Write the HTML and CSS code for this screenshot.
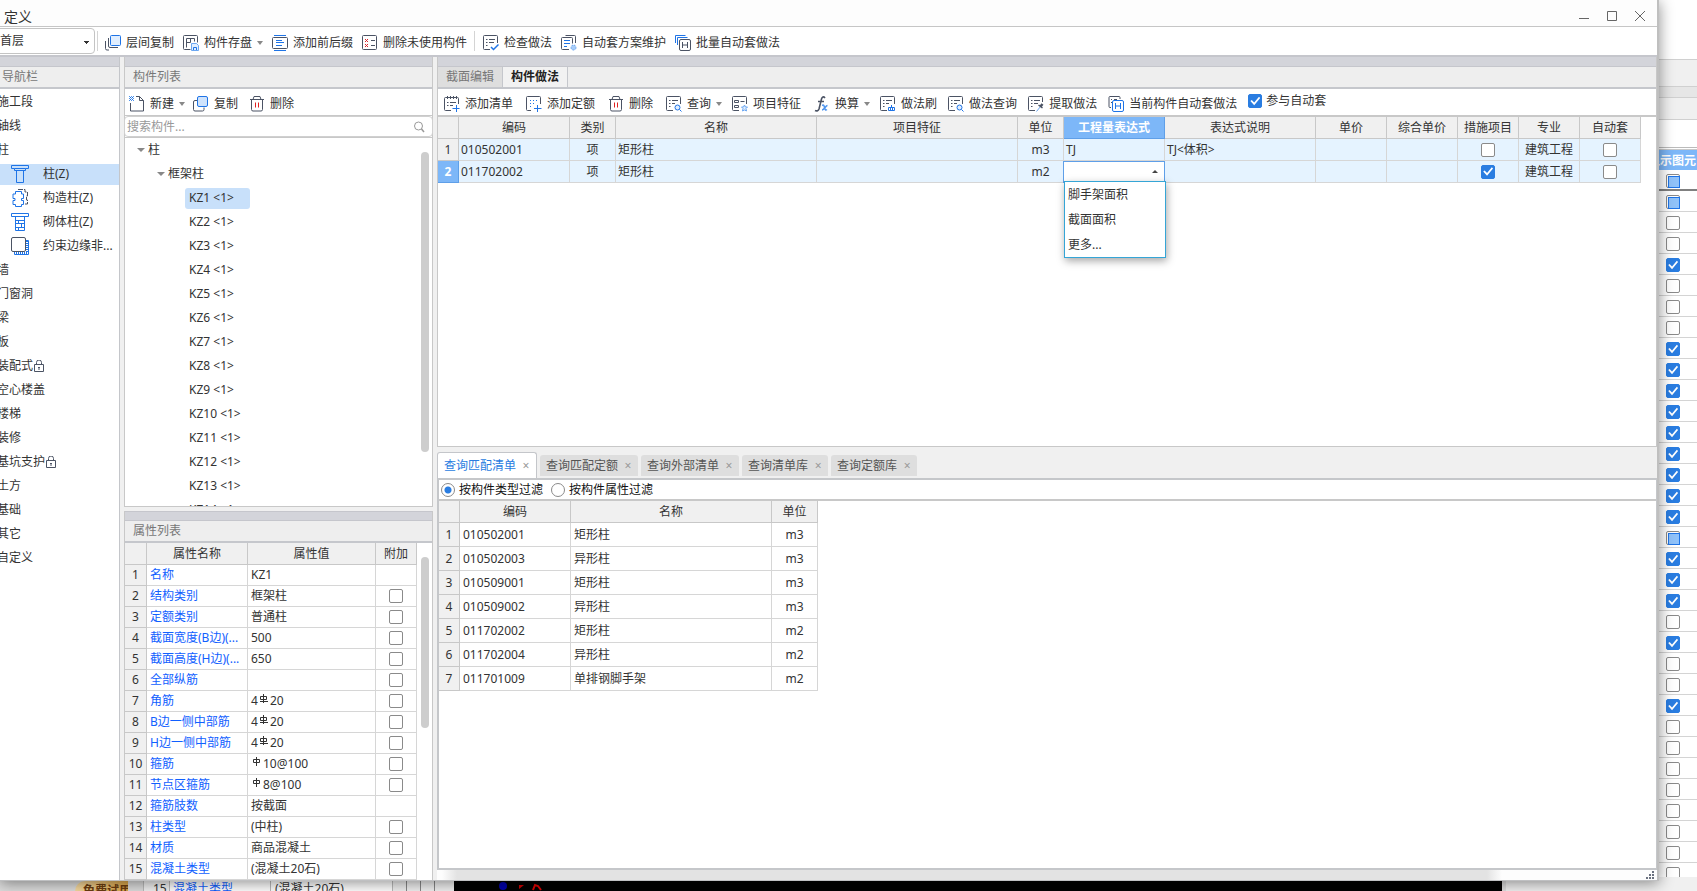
FILE: index.html
```html
<!DOCTYPE html>
<html lang="zh-CN">
<head>
<meta charset="utf-8">
<title>定义</title>
<link rel="stylesheet" href="styles.css">
</head>
<body>
<svg class="sprite" aria-hidden="true">
  <symbol id="i-floors" viewBox="0 0 16 16"><rect x="5.5" y=".5" width="10" height="10" rx="1" fill="#e0eeff" stroke="#1f74e6"/><path d="M3.500 3v8a1.500 1.500 0 0 0 1.500 1.500h8M.5 6v7.500a1.500 1.500 0 0 0 1.500 1.500h2"/></symbol>
  <symbol id="i-save" viewBox="0 0 16 16"><path d="M7.500 14.500h-6a1 1 0 0 1-1-1v-12a1 1 0 0 1 1-1h12a1 1 0 0 1 1 1v6M3.500 12.500v-9h8v3M3.500 7.500h4v-4"/><path d="M8.500 8.500h5l2 2v5h-7z" fill="#e0eeff" stroke="#6ba7f2"/><path d="M10.500 15v-2.500h3V15" stroke="#1f74e6"/></symbol>
  <symbol id="i-affix" viewBox="0 0 16 16"><path d="M2 .5h12M2 15.500h12M4 5.500h6M4 7.500h8M4 10.500h6" stroke="#1f74e6"/><rect x=".5" y="2.500" width="15" height="11" rx="1"/></symbol>
  <symbol id="i-unused" viewBox="0 0 16 16"><rect x=".5" y=".5" width="14" height="14" rx="1"/><path d="M3 4l3 3M6 4l-3 3M3 9l3 3M6 9l-3 3" stroke="#d9252b"/><path d="M9 5.500h4M9 10.500h4"/></symbol>
  <symbol id="i-check" viewBox="0 0 16 16"><path d="M7 14.500H1.500a1 1 0 0 1-1-1v-12a1 1 0 0 1 1-1h12a1 1 0 0 1 1 1V8M3 4.500h1.500M6 4.500h6M3 7.500h1.500M6 7.500h5M3 10.500h1.500"/><path d="M8 12l2.500 2.500L15.500 9.500" stroke="#1f74e6" stroke-width="1.500"/></symbol>
  <symbol id="i-plan" viewBox="0 0 16 16"><path d="M8 14.500H1.500a1 1 0 0 1-1-1v-10a1 1 0 0 1 1-1h9a1 1 0 0 1 1 1v5M4.500.5h9a1 1 0 0 1 1 1V8"/><path d="M3 5.500h6M3 8.500h6M3 11.500h3" stroke="#1f74e6"/><circle cx="12.500" cy="12.500" r="2.500" fill="#a9cdf8" stroke="#6ba7f2" stroke-dasharray="2 1"/></symbol>
  <symbol id="i-batch" viewBox="0 0 16 16"><path d="M.5 8V.5h10M2.500 10V2.500h10" stroke="#1f74e6"/><rect x="4.500" y="4.500" width="11" height="11" rx="1.500"/><path d="M7.500 7v6M12.500 7v6M7.500 10h5"/></symbol>
  <symbol id="i-new" viewBox="0 0 16 16"><path d="M1.500 7v8h13V4.500l-4-4H7M10.500.5v4h4"/><path d="M0 .5h5M0 2.500h5M0 4.500h5" stroke="#4d94ee" stroke-dasharray="1 1"/><path d="M0 1.500h5M0 3.500h5" stroke="#1f74e6" stroke-dasharray="1 1" stroke-dashoffset="1"/></symbol>
  <symbol id="i-copy" viewBox="0 0 16 16"><path d="M4 4.500H2a1.500 1.500 0 0 0-1.500 1.500v7.500a1.500 1.500 0 0 0 1.500 1.500h7.500a1.500 1.500 0 0 0 1.500-1.500v-2"/><rect x="4.500" y=".5" width="10" height="10" rx="1.500" fill="#cfe3fc" stroke="#1f74e6"/></symbol>
  <symbol id="i-trash" viewBox="0 0 16 16"><path d="M1 3.500h14M4 3.500l1-3h6l1 3M2.500 3.500v10a1.500 1.500 0 0 0 1.500 1.500h8a1.500 1.500 0 0 0 1.500-1.500v-10"/><path d="M6.500 6.500v5M9.500 6.500v5" stroke="#e02020"/></symbol>
  <symbol id="i-addlist" viewBox="0 0 16 16"><path d="M7 14.500H1.500a1 1 0 0 1-1-1v-11a1 1 0 0 1 1-1h12a1 1 0 0 1 1 1V8M3.500 0v3M6.500 0v3M9.500 0v3M12.500 0v3M3 6.500h1.500M6 6.500h6M3 9.500h1.500M6 9.500h3"/><path d="M8.500 12.500h7M12.500 9v7" stroke="#1f74e6"/></symbol>
  <symbol id="i-addquota" viewBox="0 0 16 16"><path d="M5 14.500H1.500a1 1 0 0 1-1-1v-12a1 1 0 0 1 1-1h12a1 1 0 0 1 1 1V8"/><path d="M4 4.500h9M4 7.500h6M4 10.500h3" stroke="#1f74e6" stroke-dasharray="1 2"/><path d="M8 12.500h7.500M11.500 9v7" stroke="#1f74e6"/></symbol>
  <symbol id="i-query" viewBox="0 0 16 16"><path d="M7 14.500H1.500a1 1 0 0 1-1-1v-12a1 1 0 0 1 1-1h12a1 1 0 0 1 1 1V8M3 4.500h1.500M6 4.500h6M3 7.500h1.500M6 7.500h3M3 10.500h1.500"/><circle cx="11.500" cy="11.500" r="2.500" fill="#e0eeff" stroke="#1f74e6"/><path d="M13.500 13.500l2 2" stroke="#1f74e6"/></symbol>
  <symbol id="i-feature" viewBox="0 0 16 16"><path d="M7 14.500H1.500a1 1 0 0 1-1-1v-12a1 1 0 0 1 1-1h12a1 1 0 0 1 1 1V8M2.500 4.500h4v2h-4zM2.500 9.500h4v2h-4zM8.500 5.500h4"/><path d="M12.500 9l1 2h2l-1.500 1.500.5 2.500-2-1-2 1 .5-2.500L9.500 11h2z" fill="#e0eeff" stroke="#6ba7f2"/></symbol>
  <symbol id="i-fx" viewBox="0 0 16 16"><path d="M11 2C9.500 0 8 1 7.500 3L5 13c-.5 1.500-2 2.500-4 1.500M4 5.500h6" stroke-width="1.600"/><path d="M8 9.500c2-1 2 0 2.500 2s1 3 2.500 2M13.500 9.500c-2 0-3 4.500-5.500 4.500" stroke="#4d94ee" stroke-width="1.500"/></symbol>
  <symbol id="i-brush" viewBox="0 0 16 16"><path d="M7 14.500H1.500a1 1 0 0 1-1-1v-12a1 1 0 0 1 1-1h12a1 1 0 0 1 1 1V8M3 4.500h1.500M6 4.500h6M3 7.500h1.500M6 7.500h3M3 10.500h1.500"/><path d="M11.500 9v2.500M8.500 14.500v-3h6v3zM10.500 12v2.500M12.500 12v2.500" stroke="#1f74e6"/></symbol>
  <symbol id="i-extract" viewBox="0 0 16 16"><path d="M7 14.500H1.500a1 1 0 0 1-1-1v-12a1 1 0 0 1 1-1h12a1 1 0 0 1 1 1V6M3 4.500h1.500M6 4.500h6M3 7.500h1.500M6 7.500h4M3 10.500h1.500"/><path d="M8.500 15.500l4-5" stroke="#6ba7f2"/><path d="M10.500 9l4 3" stroke-width="1.500"/><path d="M12.500 10.500l2-2.500" stroke-width="2.500"/></symbol>
  <symbol id="i-current" viewBox="0 0 16 16"><path d="M3 11.500H2a1 1 0 0 1-1-1v-9a1 1 0 0 1 1-1h9a1 1 0 0 1 1 1V3M3 3.500h1M6 3.500h3M3 6.500h1"/><rect x="4.500" y="4.500" width="11" height="11" rx="1.500" stroke="#1f74e6" fill="#fff"/><path d="M7.500 7v6M12.500 7v6M7.500 10h5" stroke="#1f74e6"/></symbol>
  <symbol id="i-lock" viewBox="0 0 10 12"><path d="M2.500 4V2.500a2 2 0 0 1 5 0V4M.5 4.500h9v7h-9zM5 7v3M4 7.500h2"/></symbol>
  <symbol id="i-search" viewBox="0 0 12 12"><circle cx="5.500" cy="5" r="4" stroke="#999"/><path d="M8.500 8l2.500 3" stroke="#999" stroke-width="1.500"/></symbol>
  <symbol id="i-column" viewBox="0 0 18 18"><path d="M.5.5h17v3h-3v2h-11v-2h-3zM3.500 3.500h11M5.500 5.500v12h7v-12" stroke="#1f74e6"/></symbol>
  <symbol id="i-struct" viewBox="0 0 18 18"><path d="M7 .5h7v2.500h2.500v4h-1v4h1v4H14" stroke-dasharray="5 1"/><path d="M4.500 2.500h6v2.500h2v4.500h-2v2h2v4h-2v2h-6v-2H2v-4h2v-2H2V5h2.500z" fill="#fff" stroke="#1f74e6"/></symbol>
  <symbol id="i-masonry" viewBox="0 0 18 18"><path d="M.5.5h17v3H.5zM4.500 3.500v14h9v-14M4.500 7.500h9M4.500 10.500h9M4.500 14.500h9M7.500 7.500v3M10.500 10.500v4M7.500 14.500v3" stroke="#1f74e6"/></symbol>
  <symbol id="i-edge" viewBox="0 0 18 18"><path d="M15 3.500h2.500v14h-14V15" stroke="#1f74e6"/><path d="M16 4v12H4" stroke="#1f74e6" stroke-width="2" stroke-dasharray="1 1"/><rect x=".5" y=".5" width="14" height="14" rx="1.500" fill="#fff"/></symbol>
  <symbol id="i-rebar3" viewBox="0 0 10 10"><path d="M4.500 0v9M1.500 5.500v-3h6v3zM1 7.500h8" stroke="#333"/></symbol>
  <symbol id="i-rebar1" viewBox="0 0 10 10"><path d="M4.500 0v9M1.500 2.500h6v3h-6z" stroke="#333"/></symbol>
</svg>

<div class="backdrop" aria-hidden="true">
  <aside class="display-list">
    <div class="dl-top"></div><div class="dl-band"></div><div class="dl-band dl-dark"></div><div class="dl-band dl-low"></div><div class="dl-gap"></div>
    <div class="dl-head">显示图元</div>
    <div class="dl-row dl-all"><input type="checkbox" class="part"></div>
    <div class="dl-row"><input type="checkbox" class="part"></div>
    <div class="dl-row"><input type="checkbox"></div>
    <div class="dl-row"><input type="checkbox"></div>
    <div class="dl-row"><input type="checkbox" checked></div>
    <div class="dl-row"><input type="checkbox"></div>
    <div class="dl-row"><input type="checkbox"></div>
    <div class="dl-row"><input type="checkbox"></div>
    <div class="dl-row"><input type="checkbox" checked></div>
    <div class="dl-row"><input type="checkbox" checked></div>
    <div class="dl-row"><input type="checkbox" checked></div>
    <div class="dl-row"><input type="checkbox" checked></div>
    <div class="dl-row"><input type="checkbox" checked></div>
    <div class="dl-row"><input type="checkbox" checked></div>
    <div class="dl-row"><input type="checkbox" checked></div>
    <div class="dl-row"><input type="checkbox" checked></div>
    <div class="dl-row"><input type="checkbox" checked></div>
    <div class="dl-row"><input type="checkbox" class="part"></div>
    <div class="dl-row"><input type="checkbox" checked></div>
    <div class="dl-row"><input type="checkbox" checked></div>
    <div class="dl-row"><input type="checkbox" checked></div>
    <div class="dl-row"><input type="checkbox"></div>
    <div class="dl-row"><input type="checkbox" checked></div>
    <div class="dl-row"><input type="checkbox"></div>
    <div class="dl-row"><input type="checkbox"></div>
    <div class="dl-row"><input type="checkbox" checked></div>
    <div class="dl-row"><input type="checkbox"></div>
    <div class="dl-row"><input type="checkbox"></div>
    <div class="dl-row"><input type="checkbox"></div>
    <div class="dl-row"><input type="checkbox"></div>
    <div class="dl-row"><input type="checkbox"></div>
    <div class="dl-row"><input type="checkbox"></div>
    <div class="dl-row"><input type="checkbox"></div>
    <div class="dl-row"><input type="checkbox"></div>
    <div class="dl-row"><input type="checkbox"></div>
  </aside>
  <div class="under">
    <div class="u-left"><span class="trial">免费试用</span></div>
    <div class="u-row"><span class="u-no">15</span><span class="u-name">混凝土类型</span><span class="u-val">(混凝土20石)</span><span class="u-box"></span><span class="u-box"></span><span class="u-box"></span></div>
    <div class="u-canvas"><svg width="60" height="14" viewBox="0 0 60 14"><circle cx="10" cy="9" r="4" fill="#00a"/><path d="M26 8h5l-5 4z" fill="#c00"/><path d="M40 13l2-5 3 1 3 4" fill="none" stroke="#d00" stroke-width="2"/></svg></div>
    <div class="u-right"></div>
  </div>
</div>

<main class="window">
  <header class="titlebar">
    <h1>定义</h1>
    <div class="win-controls">
      <button aria-label="最小化"><svg width="12" height="12"><path d="M1 8.500h10"/></svg></button>
      <button aria-label="最大化"><svg width="12" height="12"><path d="M1.500 1.500h9v9h-9z"/></svg></button>
      <button aria-label="关闭"><svg width="12" height="12"><path d="M1 1l10 10M11 1L1 11"/></svg></button>
    </div>
  </header>

  <div class="toolbar main-tools">
    <select class="floor" aria-label="楼层"><option>首层</option></select>
    <i class="sep"></i>
    <button><svg><use href="#i-floors"/></svg>层间复制</button>
    <button class="drop"><svg><use href="#i-save"/></svg>构件存盘</button>
    <button><svg><use href="#i-affix"/></svg>添加前后缀</button>
    <button><svg><use href="#i-unused"/></svg>删除未使用构件</button>
    <i class="sep"></i>
    <button><svg><use href="#i-check"/></svg>检查做法</button>
    <button><svg><use href="#i-plan"/></svg>自动套方案维护</button>
    <button><svg><use href="#i-batch"/></svg>批量自动套做法</button>
  </div>

  <div class="work">
    <nav class="nav">
      <div class="grip"></div>
      <h2 class="nav-title">导航栏</h2>
      <ul>
        <li>施工段</li><li>轴线</li><li>柱</li>
        <li class="sub on"><span><svg><use href="#i-column"/></svg>柱(Z)</span></li>
        <li class="sub"><span><svg><use href="#i-struct"/></svg>构造柱(Z)</span></li>
        <li class="sub"><span><svg><use href="#i-masonry"/></svg>砌体柱(Z)</span></li>
        <li class="sub"><span><svg><use href="#i-edge"/></svg>约束边缘非...</span></li>
        <li>墙</li><li>门窗洞</li><li>梁</li><li>板</li>
        <li>装配式<svg class="lock"><use href="#i-lock"/></svg></li>
        <li>空心楼盖</li><li>楼梯</li><li>装修</li>
        <li>基坑支护<svg class="lock"><use href="#i-lock"/></svg></li>
        <li>土方</li><li>基础</li><li>其它</li><li>自定义</li>
      </ul>
    </nav>

    <div class="middle">
      <section class="pane list-pane">
        <div class="grip"></div>
        <h2>构件列表</h2>
        <div class="toolbar list-tools">
          <button class="drop"><svg><use href="#i-new"/></svg>新建</button>
          <button><svg><use href="#i-copy"/></svg>复制</button>
          <button><svg><use href="#i-trash"/></svg>删除</button>
        </div>
        <label class="search"><input type="text" placeholder="搜索构件..." aria-label="搜索构件"><svg><use href="#i-search"/></svg></label>
        <div class="tree">
          <ul>
            <li class="l1">柱</li>
            <li class="l2">框架柱</li>
            <li class="l3 on"><span>KZ1 &lt;1&gt;</span></li>
            <li class="l3"><span>KZ2 &lt;1&gt;</span></li>
            <li class="l3"><span>KZ3 &lt;1&gt;</span></li>
            <li class="l3"><span>KZ4 &lt;1&gt;</span></li>
            <li class="l3"><span>KZ5 &lt;1&gt;</span></li>
            <li class="l3"><span>KZ6 &lt;1&gt;</span></li>
            <li class="l3"><span>KZ7 &lt;1&gt;</span></li>
            <li class="l3"><span>KZ8 &lt;1&gt;</span></li>
            <li class="l3"><span>KZ9 &lt;1&gt;</span></li>
            <li class="l3"><span>KZ10 &lt;1&gt;</span></li>
            <li class="l3"><span>KZ11 &lt;1&gt;</span></li>
            <li class="l3"><span>KZ12 &lt;1&gt;</span></li>
            <li class="l3"><span>KZ13 &lt;1&gt;</span></li>
            <li class="l3"><span>KZ14 &lt;1&gt;</span></li>
          </ul>
          <div class="track"><div class="thumb"></div></div>
        </div>
      </section>

      <section class="pane props-pane">
        <div class="grip"></div>
        <h2>属性列表</h2>
        <div class="props">
          <table class="grid props-grid">
            <colgroup><col class="p-no"><col class="p-name"><col><col class="p-add"></colgroup>
            <thead><tr><th></th><th>属性名称</th><th>属性值</th><th>附加</th></tr></thead>
            <tbody>
              <tr><th>1</th><td>名称</td><td>KZ1</td><td></td></tr>
              <tr><th>2</th><td>结构类别</td><td>框架柱</td><td><input type="checkbox" aria-label="附加"></td></tr>
              <tr><th>3</th><td>定额类别</td><td>普通柱</td><td><input type="checkbox" aria-label="附加"></td></tr>
              <tr><th>4</th><td>截面宽度(B边)(...</td><td>500</td><td><input type="checkbox" aria-label="附加"></td></tr>
              <tr><th>5</th><td>截面高度(H边)(...</td><td>650</td><td><input type="checkbox" aria-label="附加"></td></tr>
              <tr><th>6</th><td>全部纵筋</td><td></td><td><input type="checkbox" aria-label="附加"></td></tr>
              <tr><th>7</th><td>角筋</td><td>4<svg class="rebar"><use href="#i-rebar3"/></svg>20</td><td><input type="checkbox" aria-label="附加"></td></tr>
              <tr><th>8</th><td>B边一侧中部筋</td><td>4<svg class="rebar"><use href="#i-rebar3"/></svg>20</td><td><input type="checkbox" aria-label="附加"></td></tr>
              <tr><th>9</th><td>H边一侧中部筋</td><td>4<svg class="rebar"><use href="#i-rebar3"/></svg>20</td><td><input type="checkbox" aria-label="附加"></td></tr>
              <tr><th>10</th><td>箍筋</td><td><svg class="rebar"><use href="#i-rebar1"/></svg>10@100</td><td><input type="checkbox" aria-label="附加"></td></tr>
              <tr><th>11</th><td>节点区箍筋</td><td><svg class="rebar"><use href="#i-rebar1"/></svg>8@100</td><td><input type="checkbox" aria-label="附加"></td></tr>
              <tr><th>12</th><td>箍筋肢数</td><td>按截面</td><td></td></tr>
              <tr><th>13</th><td class="plain">柱类型</td><td>(中柱)</td><td><input type="checkbox" aria-label="附加"></td></tr>
              <tr><th>14</th><td>材质</td><td>商品混凝土</td><td><input type="checkbox" aria-label="附加"></td></tr>
              <tr><th>15</th><td>混凝土类型</td><td>(混凝土20石)</td><td><input type="checkbox" aria-label="附加"></td></tr>
            </tbody>
          </table>
          <div class="track"><div class="thumb short"></div></div>
        </div>
      </section>
    </div>

    <div class="right">
      <section class="pane method-pane">
        <div class="grip"></div>
        <div class="tabs"><button>截面编辑</button><button class="on">构件做法</button></div>
        <div class="toolbar method-tools">
          <button><svg><use href="#i-addlist"/></svg>添加清单</button>
          <button><svg><use href="#i-addquota"/></svg>添加定额</button>
          <button><svg><use href="#i-trash"/></svg>删除</button>
          <button class="drop"><svg><use href="#i-query"/></svg>查询</button>
          <button><svg><use href="#i-feature"/></svg>项目特征</button>
          <button class="drop"><svg><use href="#i-fx"/></svg>换算</button>
          <div class="tool-group">
            <button><svg><use href="#i-brush"/></svg>做法刷</button>
            <button><svg><use href="#i-query"/></svg>做法查询</button>
            <button><svg><use href="#i-extract"/></svg>提取做法</button>
            <button><svg><use href="#i-current"/></svg>当前构件自动套做法</button>
            <label class="auto"><input type="checkbox" checked>参与自动套</label>
          </div>
        </div>
        <table class="grid method-grid">
          <colgroup><col class="w21"><col class="w111"><col class="w46"><col class="w201"><col class="w201"><col class="w46"><col class="w101"><col class="w151"><col class="w71"><col class="w71"><col class="w61"><col class="w61"><col class="w61"></colgroup>
          <thead><tr><th></th><th>编码</th><th>类别</th><th>名称</th><th>项目特征</th><th>单位</th><th class="on">工程量表达式</th><th>表达式说明</th><th>单价</th><th>综合单价</th><th>措施项目</th><th>专业</th><th>自动套</th></tr></thead>
          <tbody>
            <tr><th>1</th><td>010502001</td><td class="mid">项</td><td>矩形柱</td><td></td><td class="mid">m3</td><td>TJ</td><td>TJ&lt;体积&gt;</td><td></td><td></td><td class="mid"><input type="checkbox" aria-label="措施项目"></td><td class="mid">建筑工程</td><td class="mid"><input type="checkbox" aria-label="自动套"></td></tr>
            <tr><th class="on">2</th><td>011702002</td><td class="mid">项</td><td>矩形柱</td><td></td><td class="mid">m2</td>
              <td class="editing"><div class="combo"><input type="text" role="combobox" aria-expanded="true" aria-label="工程量表达式"></div>
                <ul class="menu" role="listbox"><li role="option">脚手架面积</li><li role="option">截面面积</li><li role="option">更多...</li></ul></td>
              <td></td><td></td><td></td><td class="mid"><input type="checkbox" checked aria-label="措施项目"></td><td class="mid">建筑工程</td><td class="mid"><input type="checkbox" aria-label="自动套"></td></tr>
          </tbody>
        </table>
      </section>

      <div class="query-tabs">
        <button class="on">查询匹配清单<i>×</i></button>
        <button>查询匹配定额<i>×</i></button>
        <button>查询外部清单<i>×</i></button>
        <button>查询清单库<i>×</i></button>
        <button>查询定额库<i>×</i></button>
      </div>
      <section class="query-pane">
        <div class="filters">
          <label><input type="radio" name="filter" checked>按构件类型过滤</label>
          <label><input type="radio" name="filter">按构件属性过滤</label>
        </div>
        <table class="grid query-grid">
          <colgroup><col class="w21"><col class="w111"><col class="w201"><col class="w46"></colgroup>
          <thead><tr><th></th><th>编码</th><th>名称</th><th>单位</th></tr></thead>
          <tbody>
            <tr><th>1</th><td>010502001</td><td>矩形柱</td><td class="mid">m3</td></tr>
            <tr><th>2</th><td>010502003</td><td>异形柱</td><td class="mid">m3</td></tr>
            <tr><th>3</th><td>010509001</td><td>矩形柱</td><td class="mid">m3</td></tr>
            <tr><th>4</th><td>010509002</td><td>异形柱</td><td class="mid">m3</td></tr>
            <tr><th>5</th><td>011702002</td><td>矩形柱</td><td class="mid">m2</td></tr>
            <tr><th>6</th><td>011702004</td><td>异形柱</td><td class="mid">m2</td></tr>
            <tr><th>7</th><td>011701009</td><td>单排钢脚手架</td><td class="mid">m2</td></tr>
          </tbody>
        </table>
      </section>
      <footer class="status"><svg width="9" height="9" viewBox="0 0 9 9"><path d="M6 0h2v2H6zM3 3h2v2H3zM6 3h2v2H6zM0 6h2v2H0zM3 6h2v2H3zM6 6h2v2H6z" fill="#6b7280"/></svg></footer>
    </div>
  </div>
</main>
</body>
</html>
```

FILE: styles.css
```css
* { box-sizing: border-box; }
html, body { height: 100%; }
body {
  margin: 0;
  position: relative;
  overflow: hidden;
  background: #f0f0f0;
  color: #333;
  font: 12px/20px "Noto Sans", "Noto Sans CJK SC", sans-serif;
  white-space: nowrap;
}
ul { list-style: none; margin: 0; padding: 0; }
h1, h2 { margin: 0; font-size: 12px; font-weight: 400; }
button, input, select { font: inherit; color: inherit; }
button { border: 0; background: none; padding: 0; }
svg { fill: none; stroke: #4b5364; flex: none; }
.sprite { display: none; }

input[type="checkbox"], input[type="radio"] {
  appearance: none;
  flex: none;
  display: block;
  width: 14px;
  height: 14px;
  margin: 0;
  border: 1px solid #8a8a8a;
  border-radius: 2px;
  background: #fff;
}
input[type="checkbox"]:checked { border-color: #2a7de1; background: #2a7de1; }
input[type="checkbox"]:checked::before {
  content: "";
  display: block;
  width: 12px;
  height: 12px;
  background: #fff;
  clip-path: polygon(10% 50%, 22% 42%, 42% 62%, 82% 14%, 92% 24%, 42% 86%);
}
input.part::before {
  content: "";
  display: block;
  width: 10px;
  height: 10px;
  margin: 1px;
  border: 1px solid #1f74e6;
  background: #90c2f9;
}
input[type="radio"] { border-radius: 50%; }
input[type="radio"]:checked { background: radial-gradient(#2a7de1 0 3px, #fff 4px); }

/* application behind the dialog */
.backdrop { height: 100%; display: flex; flex-direction: column; overflow: hidden; position: relative; }
.display-list { align-self: flex-end; width: 60px; flex: 1; min-height: 0; background: #fff; overflow: hidden; }
.dl-top { height: 60px; border-bottom: 1px solid #d0d0d0; }
.dl-band { height: 27px; background: #f0f0f0; border-bottom: 1px solid #d0d0d0; }
.dl-dark { height: 11px; background: #e6e6e6; }
.dl-low { height: 22px; }
.dl-gap { height: 30px; border-bottom: 1px solid #c8c8c8; }
.dl-gap::after { content: ""; display: block; height: 27px; border-bottom: 1px solid #bbb; }
.dl-head { height: 20px; line-height: 22px; padding-left: 11px; background: #7db7f8; color: #fff; font-weight: 700; }
.dl-row { height: 21px; padding: 4px 0 0 29px; border-bottom: 1px solid #d4d4d4; }
.dl-all { border-bottom: 2px solid #808080; }
.under { display: flex; height: 14px; flex: none; background: #e0e0e0; }
.u-left { width: 143px; padding-left: 75px; background: #dcdcdc; }
.trial { display: block; width: 53px; height: 20px; margin-top: 4px; padding-left: 8px; overflow: hidden; border-radius: 10px 0 0 0; background: linear-gradient(90deg, #f5d9a0, #dba64a); color: #6b3d10; font-weight: 700; line-height: 20px; }
.u-row { display: flex; width: 311px; background: #f0f0f0; border-left: 1px solid #bbb; line-height: 24px; }
.u-no { width: 26px; padding-left: 9px; border-right: 1px solid #bbb; }
.u-name { width: 101px; padding-left: 3px; background: #fff; color: #1060ff; border-right: 1px solid #bbb; }
.u-val { width: 122px; padding-left: 4px; background: #fff; border-right: 1px solid #bbb; }
.u-box { width: 14px; border-right: 1px solid #888; }
.u-canvas { flex: 1; background: #000; }
.u-canvas svg { display: block; margin-left: 39px; stroke: none; }
.u-right { width: 195px; background: #f0f0f0; border-left: 4px solid #ddd; }

/* dialog window floating over the application */
.window {
  position: absolute;
  inset: 0 38px 10px 0;
  display: flex;
  flex-direction: column;
  background: #f0f0f0;
  border-right: 2px solid #bfbfbf;
  border-bottom: 1px solid #bfc0c2;
  box-shadow: 0 2px 14px rgba(0, 0, 0, .45);
}
.titlebar { display: flex; justify-content: space-between; height: 27px; padding: 5px 11px 0 4px; background: #fdfdfd; border-bottom: 1px solid #c6c6c6; }
.titlebar h1 { font-size: 14px; line-height: 23px; }
.win-controls { display: flex; gap: 16px; padding-top: 5px; }
.win-controls svg { display: block; stroke: #666; }
.win-controls button { height: 12px; }

.toolbar { display: flex; align-items: center; background: #fff; }
.toolbar button { display: flex; align-items: center; gap: 5px; padding-top: 3px; line-height: 20px; }
.toolbar button svg { width: 16px; height: 16px; }
.drop::after { content: ""; border: 3px solid transparent; border-top: 4px solid #888; border-bottom: 0; }
.toolbar .drop { margin-right: -3px; }
.main-tools { height: 30px; gap: 9px; border-bottom: 2px solid #c5c6cc; }
.main-tools .drop { margin-right: 0; }
.floor {
  appearance: none;
  width: 100px;
  height: 26px;
  margin-left: -5px;
  padding: 0 4px;
  border: 1px solid #c4c4c4;
  border-radius: 4px;
  background: linear-gradient(#333 0 0) 88px 12px / 5px 1px no-repeat, linear-gradient(#333 0 0) 89px 13px / 3px 1px no-repeat, linear-gradient(#333 0 0) 90px 14px / 1px 1px no-repeat, #fff;
}
.sep { width: 1px; height: 20px; background: #d4d4d4; margin: 0 -2px 0 -7px; }
.sep ~ .sep { margin: 0 -1px 0 -2px; }

.work { display: flex; gap: 4px; flex: 1; min-height: 0; }
.grip { height: 10px; background: #d3d4da; border-bottom: 1px solid #c5c6cc; }
.nav { width: 120px; flex: none; background: #fff; border-right: 1px solid #c4c6ca; overflow: hidden; }
.nav-title, .pane h2 { height: 22px; line-height: 20px; background: #eee; color: #777; border-bottom: 2px solid #c5c7cc; }
.nav-title { padding-left: 2px; }
.pane h2 { padding-left: 8px; }
.nav ul { padding-top: 1px; }
.nav li { display: flex; align-items: center; height: 24px; margin-left: -3px; }
.nav li span { display: flex; align-items: center; gap: 14px; flex: 1; height: 21px; padding-left: 14px; }
.nav .sub svg { width: 18px; height: 18px; }
.nav .on span { background: #c8e0fa; }
.lock { width: 10px; height: 12px; margin-left: 1px; }

.middle { display: flex; flex-direction: column; gap: 4px; width: 309px; flex: none; }
.pane { background: #fff; border: 1px solid #c8c8c8; border-top: 0; }
.list-pane { display: flex; flex-direction: column; flex: 1; min-height: 0; }
.list-tools { height: 27px; gap: 11px; padding-left: 4px; border-bottom: 1px solid #c8c8c8; }
.search { display: flex; align-items: center; height: 21px; border: 1px solid #d0d0d0; border-radius: 4px; margin: 0 -1px; padding: 0 7px 0 2px; }
.search input { flex: 1; min-width: 0; height: 18px; padding: 0; border: 0; outline: 0; background: none; }
.search input::placeholder { color: #999; }
.search svg { width: 12px; height: 12px; }
.tree { display: flex; flex: 1; min-height: 0; overflow: hidden; border-top: 1px solid #c8c8c8; }
.tree ul { flex: 1; }
.tree li { display: flex; align-items: center; height: 24px; }
.l1::before, .l2::before { content: ""; border: 4px solid transparent; border-top: 4px solid #888; border-bottom: 0; margin-right: 3px; }
.l1 { padding-left: 12px; }
.l2 { padding-left: 32px; }
.l3 { padding-left: 60px; }
.l3 span { width: 65px; height: 21px; padding-left: 4px; border-radius: 3px; }
.l3.on span { background: #c8e0fa; }
.track { width: 15px; padding: 14px 3px 0 4px; flex: none; }
.thumb { height: 300px; border-radius: 4px; background: #cdcdcd; }
.thumb.short { height: 171px; }
.props-pane { border-bottom: 0; }
.props-pane .grip { border-top: 1px solid #c5c6cc; }
.props { display: flex; }

.grid { border-collapse: separate; border-spacing: 0; table-layout: fixed; }
.grid th, .grid td { height: 21px; padding: 0 2px; overflow: hidden; border-right: 1px solid #d6d6d6; border-bottom: 1px solid #d6d6d6; font-weight: 400; line-height: 20px; text-align: left; }
.grid th { background: #f0f0f0; border-color: #c8c8c8; text-align: center; padding: 0; }
.grid thead th { height: 22px; line-height: 21px; }
.grid input[type="checkbox"] { margin: 0 auto; }
.grid .mid { text-align: center; }
.props-grid { flex: 1; min-width: 0; }
.props-grid td:nth-child(2) { color: #1060ff; }
.props-grid td { padding: 0 3px; }
.props-grid .plain { color: #333; }
.p-no { width: 22px; }
.p-name { width: 101px; }
.p-add { width: 41px; }
.rebar { width: 10px; height: 10px; margin: 0 1px; vertical-align: 1px; }

.right { display: flex; flex-direction: column; flex: 1; min-width: 0; }
.method-pane { flex: none; height: 390px; }
.tabs { display: flex; height: 22px; background: #eee; border-bottom: 2px solid #c5c7cc; }
.tabs button { width: 65px; background: #dedede; color: #777; border-right: 1px solid #c5c7cc; line-height: 20px; }
.tabs .on { background: #f2f2f2; color: #222; font-weight: 700; }
.method-tools { height: 28px; gap: 13px; padding-left: 6px; border-bottom: 2px solid #c8c8c8; }
.tool-group { display: flex; align-items: center; gap: 11px; }
.auto { display: flex; align-items: center; gap: 4px; padding-bottom: 2px; }
.w21 { width: 21px; } .w46 { width: 46px; } .w61 { width: 61px; } .w71 { width: 71px; } .w101 { width: 101px; }
.w111 { width: 111px; } .w151 { width: 151px; } .w201 { width: 201px; }
.method-grid { width: 1203px; }
.method-grid tbody th, .method-grid td { height: 22px; }
.method-grid td { background: #e5f3ff; }
.method-grid .on { background: #7db7f8; color: #fff; font-weight: 700; border-color: #5f9fe8; }
.grid td.editing { position: relative; overflow: visible; padding: 0; }
.combo { display: flex; align-items: center; height: 22px; margin: -1px; padding: 0 6px; border: 1px solid #5f9fe8; background: #fff; }
.combo input { flex: 1; min-width: 0; height: 18px; border: 0; padding: 0; outline: 0; }
.combo::after { content: ""; border: 3px solid transparent; border-bottom: 3px solid #444; border-top: 0; }
.menu { position: absolute; z-index: 2; left: 0; top: 20px; width: 102px; border: 1px solid #35a5d6; background: #fff; box-shadow: 1px 3px 8px rgba(0, 0, 0, .35); }
.menu li { height: 25px; padding-left: 3px; line-height: 25px; }

.query-tabs { display: flex; align-items: flex-end; gap: 3px; height: 31px; padding: 5px 0 0; }
.query-tabs button { display: flex; align-items: center; justify-content: space-between; height: 21px; margin-bottom: 2px; padding: 0 6px; gap: 6px; border-radius: 3px 3px 0 0; background: #dedede; color: #555; }
.query-tabs i { width: 8px; font-style: normal; color: #999; }
.query-tabs .on { height: 26px; margin-bottom: 0; padding: 0 6px; background: #fff; color: #2a7de1; border: 1px solid #c4c6ca; border-bottom: 0; }
.query-pane { flex: 1; min-height: 0; background: #fff; border: 2px solid #c5c7ca; border-right-width: 1px; }
.filters { display: flex; align-items: center; gap: 8px; height: 21px; padding-left: 2px; border-bottom: 2px solid #c8c8c8; color: #111; }
.filters label { display: flex; align-items: center; gap: 4px; }
.query-grid { width: 379px; }
.query-grid tbody th, .query-grid td { height: 24px; }
.query-grid td { padding: 0 3px; }
.status { display: flex; justify-content: flex-end; align-items: center; height: 10px; padding-right: 2px; background: linear-gradient(90deg, #fdfdfd 5px, #e3e3e3 20px calc(100% - 170px), #fdfdfd calc(100% - 155px)); }
.status svg { stroke: none; }
```
